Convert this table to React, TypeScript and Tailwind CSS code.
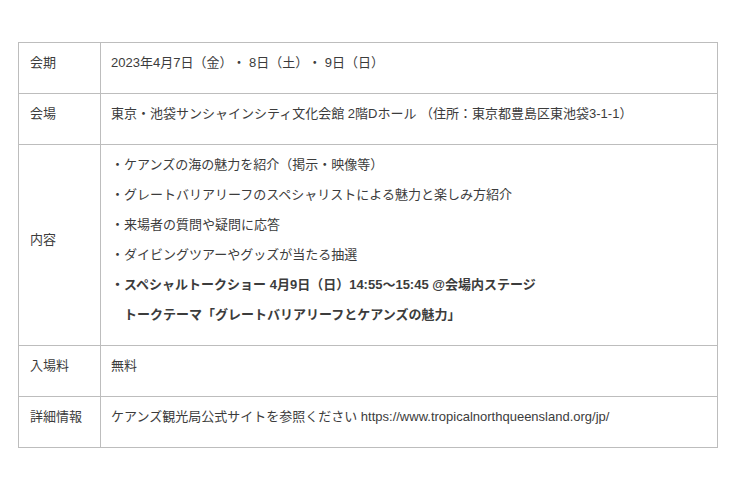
export default function App() {
  const font = { fontFamily: '"Liberation Sans", "Noto Sans CJK JP", sans-serif' }
  const items = [
    '・ケアンズの海の魅力を紹介（掲示・映像等）',
    '・グレートバリアリーフのスペシャリストによる魅力と楽しみ方紹介',
    '・来場者の質問や疑問に応答',
    '・ダイビングツアーやグッズが当たる抽選',
  ]

  return (
    <div className="min-h-screen bg-white pt-[42px] pl-[18px]" style={font}>
      <table className="w-[700px] border-collapse text-[13px] leading-[20px] text-[#3c3c3c] [text-spacing-trim:space-all]">
        <tbody>
          <tr>
            <th className="w-[82px] border border-[#bdbdbd] px-[11px] pt-[10px] pb-[10px] text-left align-middle font-normal">
              <p className="mb-[10px]">会期</p>
            </th>
            <td className="border border-[#bdbdbd] px-[10px] pt-[10px] pb-[10px] align-middle">
              <p className="mb-[10px]">2023年4月7日（金）・ 8日（土）・ 9日（日）</p>
            </td>
          </tr>
          <tr>
            <th className="border border-[#bdbdbd] px-[11px] pt-[10px] pb-[10px] text-left align-middle font-normal">
              <p className="mb-[10px]">会場</p>
            </th>
            <td className="border border-[#bdbdbd] px-[10px] pt-[10px] pb-[10px] align-middle">
              <p className="mb-[10px]">東京・池袋サンシャインシティ文化会館 2階Dホール （住所：東京都豊島区東池袋3-1-1）</p>
            </td>
          </tr>
          <tr>
            <th className="border border-[#bdbdbd] px-[11px] pt-[10px] pb-[10px] text-left align-middle font-normal">
              <p className="mb-[10px]">内容</p>
            </th>
            <td className="border border-[#bdbdbd] px-[10px] pt-[10px] pb-[10px] align-middle">
              {items.map((t) => (
                <p key={t} className="mb-[10px]">{t}</p>
              ))}
              <p className="mb-[10px] font-bold">・スペシャルトークショー 4月9日（日）14:55〜15:45 @会場内ステージ</p>
              <p className="mb-[10px] font-bold">　トークテーマ「グレートバリアリーフとケアンズの魅力」</p>
            </td>
          </tr>
          <tr>
            <th className="border border-[#bdbdbd] px-[11px] pt-[10px] pb-[10px] text-left align-middle font-normal">
              <p className="mb-[10px]">入場料</p>
            </th>
            <td className="border border-[#bdbdbd] px-[10px] pt-[10px] pb-[10px] align-middle">
              <p className="mb-[10px]">無料</p>
            </td>
          </tr>
          <tr>
            <th className="border border-[#bdbdbd] px-[11px] pt-[10px] pb-[10px] text-left align-middle font-normal">
              <p className="mb-[10px]">詳細情報</p>
            </th>
            <td className="border border-[#bdbdbd] px-[10px] pt-[10px] pb-[10px] align-middle">
              <p className="mb-[10px]">ケアンズ観光局公式サイトを参照ください https://www.tropicalnorthqueensland.org/jp/</p>
            </td>
          </tr>
        </tbody>
      </table>
    </div>
  )
}
